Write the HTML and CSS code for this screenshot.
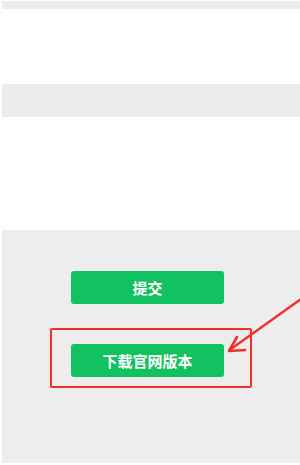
FILE: index.html
```html
<!DOCTYPE html>
<html lang="zh-CN">
  <head>
    <meta charset="UTF-8" />
    <meta name="viewport" content="width=device-width, initial-scale=1.0" />
    <title>下载官网版本</title>
    <link rel="stylesheet" href="styles.css">
  </head>
  <body>
    <div class="page">
      <div class="top-bar"></div>
      <div class="blank blank-short"></div>
      <div class="gap-bar"></div>
      <div class="blank blank-tall"></div>

      <!-- 底部按钮区 -->
      <div class="footer">
        <button class="green-btn submit-btn">提交</button>
        <div class="mark-box">
          <button class="green-btn">下载官网版本</button>
        </div>
      </div>
    </div>

    <svg class="arrow" width="300" height="465" viewBox="0 0 300 465">
      <line x1="301" y1="299" x2="231" y2="349" stroke="#f0302a" stroke-width="2.4" stroke-linecap="round" />
      <polyline points="237,337 229,351 245,350" fill="none" stroke="#f0302a" stroke-width="2.6" stroke-linecap="round" stroke-linejoin="round" />
    </svg>
  </body>
</html>
```

FILE: styles.css
```css
body {
  margin: 0;
  background: #ffffff;
  font-family: 'Noto Sans CJK SC', 'Noto Sans', sans-serif;
}
.page {
  width: 298px;
  margin-left: 2px;
  padding-top: 1px;
}
.top-bar {
  height: 8px;
  background-color: #ececec;
}
.blank {
  background-color: #ffffff;
}
.blank-short {
  height: 75px;
}
.blank-tall {
  height: 113px;
}
.gap-bar {
  height: 33px;
  background-color: #ececec;
}
.footer {
  height: 233px;
  background-color: #ededed;
  display: flex;
  flex-direction: column;
  align-items: flex-start;
  padding: 41px 0 0 48px;
  box-sizing: border-box;
}
.green-btn {
  width: 153px;
  height: 33px;
  border: none;
  border-radius: 3px;
  background-color: #12c15f;
  color: #ffffff;
  font-family: 'Noto Sans CJK SC', sans-serif;
  font-size: 15px;
  font-weight: bold;
  padding: 0;
}
.submit-btn {
  margin-left: 21px;
  margin-bottom: 24px;
}
.mark-box {
  width: 202px;
  height: 60px;
  box-sizing: border-box;
  border: 2px solid #f0302a;
  border-radius: 2px;
  padding: 14px 0 0 19px;
}
.arrow {
  position: absolute;
  left: 0;
  top: 0;
  pointer-events: none;
}
```
